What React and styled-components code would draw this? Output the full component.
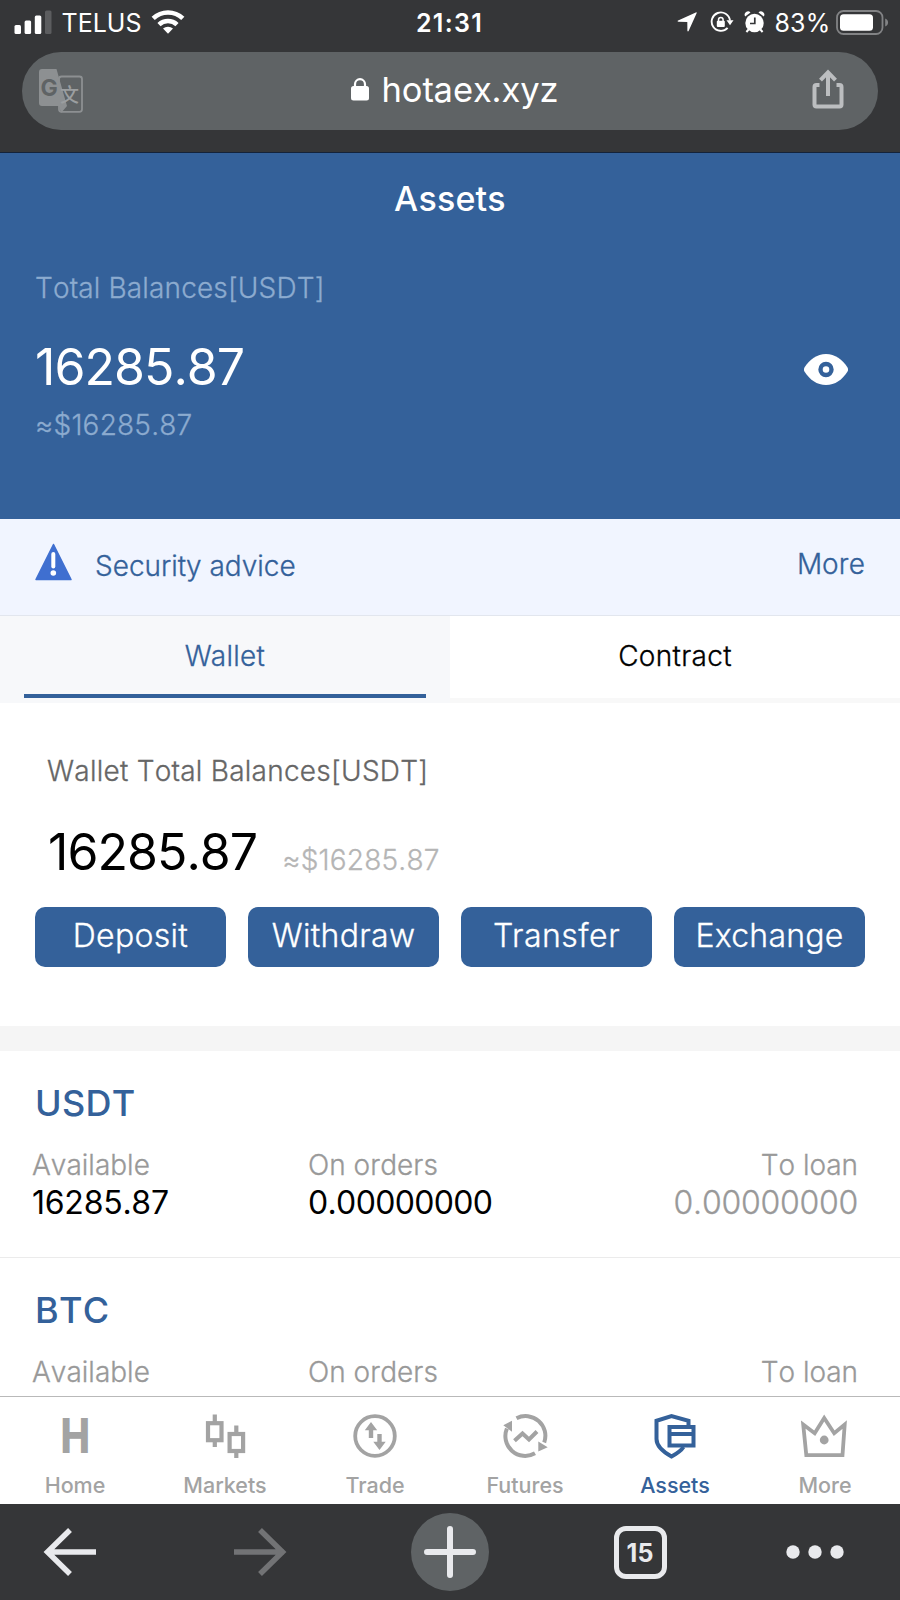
import React, { useState } from 'react';
import styled, { createGlobalStyle, css } from 'styled-components';

const BLUE = '#34619a';

const TABS = ['Wallet', 'Contract'];

const ACTIONS = [
  { label: 'Deposit', spacing: 0.3 },
  { label: 'Withdraw', spacing: 0.3 },
  { label: 'Transfer', spacing: 0.5 },
  { label: 'Exchange', spacing: 0.2 },
];

const COINS = [
  { name: 'USDT', available: '16285.87', orders: '0.00000000', loan: '0.00000000' },
  { name: 'BTC' },
];

const SignalIcon = () => (
  <svg width="38" height="24" viewBox="0 0 38 24" fill="#fff">
    <rect x="0.5" y="15" width="6.5" height="9" rx="1.5" />
    <rect x="10.6" y="10.5" width="6.5" height="13.5" rx="1.5" />
    <rect x="20.8" y="5.5" width="6.5" height="18.5" rx="1.5" />
    <rect x="31" y="0.5" width="6.5" height="23.5" rx="1.5" fill="#5c5d5f" />
  </svg>
);

const WifiIcon = () => (
  <svg width="34" height="26" viewBox="0 0 34 26" fill="none" stroke="#fff" strokeWidth="4.6">
    <path d="M2.2 9.4a21.4 21.4 0 0 1 29.6 0" />
    <path d="M8 15.6a13.2 13.2 0 0 1 18 0" />
    <path d="M17 24.8l-5-5.2a7.4 7.4 0 0 1 10 0z" fill="#fff" stroke="none" />
  </svg>
);

const LocationIcon = () => (
  <svg width="24" height="20" viewBox="0 0 24 20" fill="#fff">
    <path d="M19.6 1.2L11.6 19c-.3.7-1.2.5-1.2-.3l-.1-8.8-9-.1c-.8 0-1-.9-.2-1.2L18.8.4c.6-.3 1.1.2.8.8z" />
  </svg>
);

const RotationLockIcon = () => (
  <svg width="24" height="22" viewBox="0 0 24 22" fill="none" stroke="#fff" strokeWidth="1.9">
    <path d="M17.6 16.9A9.2 9.2 0 1 1 20 9.5" />
    <path d="M16.5 9.2h7l-3.5 5z" fill="#fff" stroke="none" />
    <rect x="6.8" y="9.8" width="8" height="6.2" rx="1" fill="#fff" stroke="none" />
    <path d="M8.5 10.5V8.7a2.3 2.3 0 0 1 4.6 0v1.8" strokeWidth="1.5" />
  </svg>
);

const AlarmIcon = () => (
  <svg width="21" height="22" viewBox="0 0 21 22">
    <circle cx="10.5" cy="12" r="9.2" fill="#fff" />
    <path d="M1.2 5.5a3.3 3.3 0 0 1 5.3-3.9zM19.8 5.5a3.3 3.3 0 0 0-5.3-3.9z" fill="#fff" />
    <path d="M4.6 18.5l-2.2 2.5M16.4 18.5l2.2 2.5" stroke="#fff" strokeWidth="2" />
    <path d="M10.8 6.5v6H6" fill="none" stroke="#353638" strokeWidth="1.7" />
  </svg>
);

const BatteryIcon = () => (
  <svg width="53" height="25" viewBox="0 0 53 25">
    <rect x="1" y="1" width="45.5" height="23" rx="6.5" fill="none" stroke="#828385" strokeWidth="1.8" />
    <rect x="4" y="4.3" width="33" height="16.4" rx="3.5" fill="#fff" />
    <path d="M49.2 8.5c3.8 1.3 3.8 6.7 0 8z" fill="#828385" />
  </svg>
);

const TranslateIcon = () => (
  <svg width="44" height="44" viewBox="0 0 44 44">
    <rect x="20" y="7.5" width="23" height="35.3" rx="2.5" fill="none" stroke="#8d9092" strokeWidth="1.8" />
    <path d="M3 0h14.5L28 37l-6 7-2-7H3a3 3 0 0 1-3-3V3a3 3 0 0 1 3-3z" fill="#8d9092" />
    <GlyphText x="1.5" y="26.5" fontSize="23" fontWeight="700" fill="#5f6365">G</GlyphText>
    <GlyphText x="21" y="33" fontSize="19" fontWeight="500" fill="#9b9ea0">文</GlyphText>
  </svg>
);

const LockIcon = () => (
  <svg width="18" height="23" viewBox="0 0 18 23">
    <rect x="0" y="8" width="18" height="14.5" rx="2.5" fill="#fff" />
    <path d="M4 9.5V6.2a5 5 0 0 1 10 0v3.3" fill="none" stroke="#fff" strokeWidth="2.2" />
  </svg>
);

const ShareIcon = () => (
  <svg width="32" height="40" viewBox="0 0 32 40" fill="none" stroke="#bcbec0" strokeWidth="4">
    <path d="M7.5 16H4.5a2 2 0 0 0-2 2v17.5a2 2 0 0 0 2 2h23a2 2 0 0 0 2-2V18a2 2 0 0 0-2-2h-3" />
    <path d="M16 27V4M8.5 11.2L16 3.3l7.5 7.9" />
  </svg>
);

const EyeIcon = () => (
  <svg width="44" height="31" viewBox="0 0 44 31">
    <path d="M22 0c9 0 16.5 5.5 21.4 13.3 1 1.6 1 2.8 0 4.4C38.5 25.5 31 31 22 31S5.5 25.5.6 17.7c-1-1.6-1-2.8 0-4.4C5.5 5.5 13 0 22 0z" fill="#fff" />
    <circle cx="22" cy="15.5" r="5.5" fill="#fff" stroke={BLUE} strokeWidth="4.4" />
  </svg>
);

const WarningIcon = () => (
  <svg width="38" height="38" viewBox="0 0 38 38">
    <path d="M18.5 1.5L36 36.5H1z" fill="#3f6fd0" stroke="#3f6fd0" strokeWidth="1.5" strokeLinejoin="round" />
    <path d="M18.3 11v12.5" stroke="#fff" strokeWidth="4" strokeLinecap="round" />
    <circle cx="18.3" cy="30" r="2.8" fill="#fff" />
  </svg>
);

const HomeIcon = () => (
  <svg width="48" height="48" viewBox="0 0 48 48" overflow="visible">
    <GlyphText x="9.5" y="41" fontSize="48" fontWeight="800" fill="currentColor" textLength="29.5" lengthAdjust="spacingAndGlyphs">H</GlyphText>
  </svg>
);

const MarketsIcon = () => (
  <svg width="48" height="48" viewBox="0 0 48 48" fill="none" stroke="currentColor" strokeWidth="4.2">
    <rect x="7" y="11.2" width="13.5" height="17" />
    <rect x="28.6" y="22" width="13.5" height="17" />
    <path d="M13.8 2.5v8M13.8 29v6M35.3 13.5v8M35.3 40v6" />
  </svg>
);

const TradeIcon = () => (
  <svg width="48" height="48" viewBox="0 0 48 48">
    <circle cx="24" cy="24" r="19.8" fill="none" stroke="currentColor" strokeWidth="3.8" />
    <path d="M20 10l6.2 8.2h-4V26h-4.4v-7.8h-4zM28.5 38l-6.2-8.2h4V22h4.4v7.8h4z" fill="currentColor" />
  </svg>
);

const FuturesIcon = () => (
  <svg width="48" height="48" viewBox="0 0 48 48" fill="none" stroke="currentColor" strokeWidth="4">
    <path d="M15.5 6.2A19.8 19.8 0 0 1 43.2 30.5M34 41.3A19.8 19.8 0 0 1 5.9 16.5" />
    <path d="M2.3 13.2L11 8.7v11zM37.3 29.5l9.4 5.8-9.4 4.2z" fill="currentColor" stroke="none" />
    <path d="M13.5 28.8l8-7.3 6.5 6 8-8" />
  </svg>
);

const AssetsIcon = () => (
  <svg width="48" height="48" viewBox="0 0 48 48" fill="none" stroke="currentColor" strokeWidth="4">
    <path d="M37.5 14V8.8L20.5 4 5.5 8.8V27c0 7.5 6 12.5 15 17.5 5-2.7 9.5-5.5 12-9.5" />
    <rect x="18.5" y="15" width="24" height="18.5" />
    <path d="M18.5 22h24" />
  </svg>
);

const CrownIcon = () => (
  <svg width="48" height="48" viewBox="0 0 48 48">
    <path d="M2.2 12.5l11.5 8.7L23.2 6l10 15.2L43.7 12.5 41.5 43.2H5.3z" fill="none" stroke="currentColor" strokeWidth="3.8" />
    <circle cx="23.2" cy="28" r="4.4" fill="currentColor" />
  </svg>
);

const ArrowIcon = ({ forward }) => (
  <svg width="54" height="50" viewBox="0 0 54 50" fill="none" stroke={forward ? '#727375' : '#e9eaed'} strokeWidth="5.5">
    <path d={forward ? 'M1 25h50M27 3l22.5 22L27 47' : 'M53 25H4M27 3L4.5 25 27 47'} />
  </svg>
);

const PlusIcon = () => (
  <svg width="52" height="52" viewBox="0 0 52 52" stroke="#e9eaed" strokeWidth="6" strokeLinecap="round">
    <path d="M26 3v46M3 26h46" />
  </svg>
);

const DotsIcon = () => (
  <svg width="58" height="14" viewBox="0 0 58 14" fill="#e9eaed">
    <circle cx="7" cy="7" r="6.7" />
    <circle cx="29" cy="7" r="6.7" />
    <circle cx="51" cy="7" r="6.7" />
  </svg>
);

const NAV = [
  { label: 'Home', icon: HomeIcon },
  { label: 'Markets', icon: MarketsIcon },
  { label: 'Trade', icon: TradeIcon },
  { label: 'Futures', icon: FuturesIcon },
  { label: 'Assets', icon: AssetsIcon },
  { label: 'More', icon: CrownIcon },
];

const App = () => {
  const [activeTab, setActiveTab] = useState('Wallet');
  const [activeNav, setActiveNav] = useState('Assets');

  return (
    <Screen>
      <GlobalStyle />
      <BrowserHeader>
        <StatusBar>
          <StatusGroup>
            <SignalIcon />
            <span>TELUS</span>
            <WifiIcon />
          </StatusGroup>
          <Clock>21:31</Clock>
          <StatusGroup $end>
            <LocationIcon />
            <RotationLockIcon />
            <AlarmIcon />
            <BatteryLevel>83%</BatteryLevel>
            <BatteryIcon />
          </StatusGroup>
        </StatusBar>
        <AddressBar>
          <TranslateIcon />
          <Address>
            <LockIcon />
            <Host>hotaex.xyz</Host>
          </Address>
          <ShareButton><ShareIcon /></ShareButton>
        </AddressBar>
      </BrowserHeader>

      <Hero>
        <PageTitle>Assets</PageTitle>
        <HeroLabel>Total Balances[USDT]</HeroLabel>
        <HeroRow>
          <Amount>16285.87</Amount>
          <EyeButton><EyeIcon /></EyeButton>
        </HeroRow>
        <HeroEstimate>≈$16285.87</HeroEstimate>
      </Hero>

      <Advice>
        <WarningIcon />
        <AdviceText>Security advice</AdviceText>
        <AdviceMore>More</AdviceMore>
      </Advice>

      <TabBar>
        {TABS.map((tab) => (
          <Tab key={tab} $active={tab === activeTab} onClick={() => setActiveTab(tab)}>
            <TabLabel>{tab}</TabLabel>
            {tab === activeTab && <TabLine />}
          </Tab>
        ))}
      </TabBar>

      <WalletPanel>
        <WalletLabel>Wallet Total Balances[USDT]</WalletLabel>
        <WalletRow>
          <Amount>16285.87</Amount>
          <WalletEstimate>≈$16285.87</WalletEstimate>
        </WalletRow>
        <Actions>
          {ACTIONS.map((action) => (
            <ActionButton key={action.label} $spacing={action.spacing}>{action.label}</ActionButton>
          ))}
        </Actions>
      </WalletPanel>

      <CoinList>
        {COINS.map((coin) => (
          <Coin key={coin.name}>
            <CoinName>{coin.name}</CoinName>
            <CoinGrid>
              <CoinCell>
                <CoinLabel>Available</CoinLabel>
                <CoinValue>{coin.available}</CoinValue>
              </CoinCell>
              <CoinCell>
                <CoinLabel>On orders</CoinLabel>
                <CoinValue $narrow>{coin.orders}</CoinValue>
              </CoinCell>
              <CoinCell $end>
                <CoinLabel>To loan</CoinLabel>
                <CoinValue $muted>{coin.loan}</CoinValue>
              </CoinCell>
            </CoinGrid>
          </Coin>
        ))}
      </CoinList>

      <BottomNav>
        {NAV.map(({ label, icon: Icon }) => (
          <NavItem key={label} $active={label === activeNav} onClick={() => setActiveNav(label)}>
            <Icon />
            <NavLabel>{label}</NavLabel>
          </NavItem>
        ))}
      </BottomNav>

      <BrowserToolbar>
        <ArrowIcon />
        <ArrowIcon forward />
        <NewTab><PlusIcon /></NewTab>
        <TabCount>15</TabCount>
        <DotsIcon />
      </BrowserToolbar>
    </Screen>
  );
};

export default App;

const GlobalStyle = createGlobalStyle`
  * {
    box-sizing: border-box;
  }

  body {
    margin: 0;
    background: #fff;
    font-family: Inter, 'Noto Sans CJK SC', sans-serif;
    font-kerning: none;
  }

  svg {
    display: block;
    flex-shrink: 0;
  }

  button {
    border: none;
    padding: 0;
    font-family: inherit;
    background: none;
  }
`;

// sits between the light and regular weights
const lightText = css`
  font-weight: 300;
  -webkit-text-stroke: 0.3px currentColor;
`;

const GlyphText = styled.text`
  font-family: Inter, 'Noto Sans CJK SC', sans-serif;
`;

const Screen = styled.div`
  width: 900px;
  height: 1600px;
  display: flex;
  flex-direction: column;
  overflow: hidden;
`;

const BrowserHeader = styled.header`
  height: 153px;
  flex-shrink: 0;
  background: #353638;
  border-bottom: 1px solid #14233a;
`;

const StatusBar = styled.div`
  height: 46px;
  display: grid;
  grid-template-columns: 1fr auto 1fr;
  padding: 0 11px 0 14px;
  color: #fff;
  font-size: 25px;
  font-weight: 400;
  line-height: 46px;
`;

const StatusGroup = styled.div`
  display: flex;
  align-items: center;
  gap: 9.5px;
  justify-content: ${({ $end }) => ($end ? 'flex-end' : 'flex-start')};

  svg {
    margin-bottom: 2px;
  }
`;

const Clock = styled.span`
  margin-left: -4px;
  font-weight: 600;
  letter-spacing: 1.3px;
`;

const BatteryLevel = styled.span`
  margin-right: -4px;
  letter-spacing: 0.2px;
`;

const AddressBar = styled.div`
  height: 78px;
  margin: 6px 22px 0;
  padding: 0 34px 0 17px;
  border-radius: 39px;
  background: #5f6365;
  display: flex;
  align-items: center;
  justify-content: space-between;
`;

const Address = styled.div`
  display: flex;
  align-items: center;
  gap: 13px;
  padding: 0 0 3px 14px;
`;

const Host = styled.span`
  color: #fff;
  font-size: 34.5px;
  font-weight: 400;
  line-height: 75px;
  letter-spacing: -0.1px;
`;

const ShareButton = styled.button`
  padding-bottom: 4px;
`;

const Hero = styled.section`
  height: 366px;
  flex-shrink: 0;
  background: ${BLUE};
  color: #fff;
  padding: 0 52px 0 35px;
`;

const PageTitle = styled.h1`
  margin: 0 -52px 23px -35px;
  text-align: center;
  font-size: 34px;
  font-weight: 500;
  line-height: 92px;
  letter-spacing: 0.2px;
`;

const HeroLabel = styled.div`
  ${lightText}
  color: #8cabcf;
  font-size: 28px;
  line-height: 40px;
  letter-spacing: 0.15px;
`;

const HeroRow = styled.div`
  display: flex;
  align-items: center;
  justify-content: space-between;
  margin: 29px 0 8px;
`;

const Amount = styled.span`
  padding-top: 1px;
  font-size: 50px;
  line-height: 59px;
  font-weight: 400;
  letter-spacing: -0.95px;
`;

const EyeButton = styled.button`
  padding-top: 5px;
`;

const HeroEstimate = styled.div`
  ${lightText}
  color: #8cabcf;
  font-size: 28px;
  line-height: 40px;
  letter-spacing: 0.2px;
`;

const Advice = styled.section`
  ${lightText}
  height: 97px;
  flex-shrink: 0;
  display: flex;
  align-items: flex-start;
  padding: 0 35px;
  background: #f1f5ff;
  border-bottom: 1px solid #e2e6ee;
  color: ${BLUE};
  font-size: 28px;

  svg {
    margin-top: 24px;
  }
`;

const AdviceText = styled.span`
  flex: 1;
  margin-left: 22px;
  line-height: 95px;
`;

const AdviceMore = styled.span`
  line-height: 91px;
`;

const TabBar = styled.div`
  height: 87px;
  flex-shrink: 0;
  display: grid;
  grid-template-columns: 1fr 1fr;
  background: #f8f8f8;
`;

const Tab = styled.button`
  height: ${({ $active }) => ($active ? '87px' : '82px')};
  display: flex;
  flex-direction: column;
  background: ${({ $active }) => ($active ? '#f7f8fa' : '#fff')};
  color: ${({ $active }) => ($active ? BLUE : '#000')};
`;

const TabLabel = styled.span`
  ${lightText}
  height: 78px;
  width: 100%;
  font-size: 28px;
  line-height: 80px;
  letter-spacing: 0.3px;
  text-align: center;
`;

const TabLine = styled.span`
  height: 4px;
  align-self: stretch;
  margin: 0 24px;
  background: ${BLUE};
`;

const WalletPanel = styled.section`
  height: 323px;
  flex-shrink: 0;
  padding: 48px 35px 0;
`;

const WalletLabel = styled.div`
  ${lightText}
  margin: 0 13px 31px 12px;
  color: #666;
  font-size: 28px;
  line-height: 40px;
  letter-spacing: 0.25px;
`;

const WalletRow = styled.div`
  height: 60px;
  display: flex;
  align-items: baseline;
  margin: 0 13px 25px 13px;
`;

const WalletEstimate = styled.span`
  ${lightText}
  margin-left: 25px;
  color: #b5b5b5;
  font-size: 28px;
  letter-spacing: 0.2px;
`;

const Actions = styled.div`
  display: grid;
  grid-template-columns: repeat(4, 1fr);
  gap: 22px;
`;

const ActionButton = styled.button`
  ${lightText}
  height: 60px;
  padding-bottom: 3px;
  border-radius: 10px;
  background: ${BLUE};
  color: #fff;
  font-size: 32px;
  line-height: 57px;
  letter-spacing: ${({ $spacing }) => $spacing}px;
`;

const CoinList = styled.section`
  flex: 1;
  min-height: 0;
  overflow: hidden;
  border-top: 25px solid #f5f5f5;
`;

const Coin = styled.div`
  height: 207px;
  padding: 30px 42px 0 32px;
  border-bottom: 1px solid #ebebeb;
`;

const CoinName = styled.div`
  margin: 0 0 22px 3px;
  color: ${BLUE};
  font-size: 36px;
  font-weight: 500;
  line-height: 44px;
  letter-spacing: 0.3px;
`;

const CoinGrid = styled.div`
  display: grid;
  grid-template-columns: 276px 1fr 1fr;
`;

const CoinCell = styled.div`
  text-align: ${({ $end }) => ($end ? 'right' : 'left')};
`;

const CoinLabel = styled.div`
  ${lightText}
  color: #999;
  font-size: 28px;
  line-height: 36px;
`;

const CoinValue = styled.div`
  padding-top: 1px;
  color: #000;
  font-size: 32px;
  font-weight: 400;
  line-height: 38px;
  letter-spacing: ${({ $narrow }) => ($narrow ? '-0.65px' : '-0.25px')};
  ${({ $muted }) => $muted && css`
    ${lightText}
    color: #999;
  `}
`;

const BottomNav = styled.nav`
  height: 108px;
  flex-shrink: 0;
  display: grid;
  grid-template-columns: repeat(6, 1fr);
  border-top: 1px solid #b9b9b9;
  background: #fff;
`;

const NavItem = styled.button`
  display: flex;
  flex-direction: column;
  align-items: center;
  gap: 11px;
  padding-top: 15px;
  color: ${({ $active }) => ($active ? BLUE : '#a3a3a3')};
`;

const NavLabel = styled.span`
  font-size: 21.5px;
  font-weight: 500;
  line-height: 28px;
`;

const BrowserToolbar = styled.footer`
  height: 96px;
  flex-shrink: 0;
  display: grid;
  grid-template-columns: 140px 240px 140px 240px 110px;
  align-items: center;
  justify-items: center;
  background: #353638;
`;

const NewTab = styled.div`
  width: 78px;
  height: 78px;
  display: flex;
  align-items: center;
  justify-content: center;
  border-radius: 50%;
  background: #5f6365;
`;

const TabCount = styled.div`
  width: 53px;
  height: 53px;
  border: 5.5px solid #e9eaed;
  border-radius: 12px;
  color: #e9eaed;
  font-size: 25px;
  font-weight: 700;
  line-height: 44px;
  text-align: center;
`;
